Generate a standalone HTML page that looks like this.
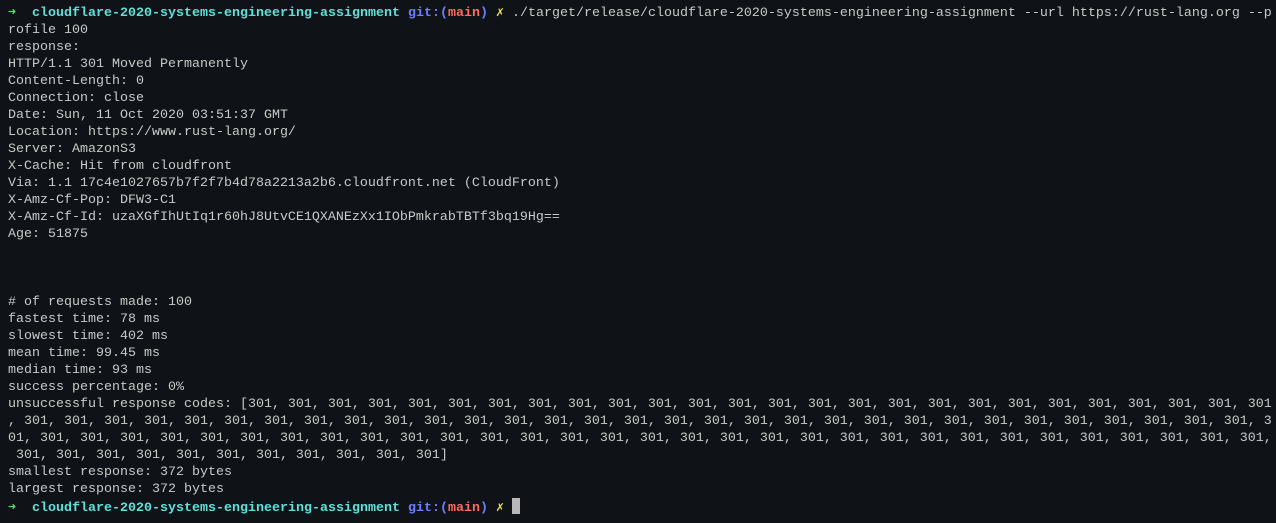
<!DOCTYPE html>
<html><head><meta charset="utf-8"><style>
html,body{margin:0;padding:0;background:#0f1317;width:1276px;height:523px;overflow:hidden}
pre{margin:0;padding:4px 0 0 8px;font-family:"Liberation Mono",monospace;font-size:13.333px;line-height:17px;color:#c9c9c9;white-space:pre}
.g{color:#4ee06a;font-weight:bold;font-family:"DejaVu Sans Mono",monospace}.c{color:#5fe0d8;font-weight:bold}.b{color:#6f7dff;font-weight:bold}.r{color:#ff6b5e;font-weight:bold}.y{color:#f2e14c;font-weight:bold}
.cur{display:inline-block;width:8px;height:16px;background:#b8b8b8;vertical-align:-3px}
</style></head><body><pre><span class="g">➜</span>  <span class="c">cloudflare-2020-systems-engineering-assignment</span> <span class="b">git:(</span><span class="r">main</span><span class="b">)</span> <span class="y">✗</span> ./target/release/cloudflare-2020-systems-engineering-assignment --url https://rust-lang.org --p
rofile 100
response:
HTTP/1.1 301 Moved Permanently
Content-Length: 0
Connection: close
Date: Sun, 11 Oct 2020 03:51:37 GMT
Location: https://www.rust-lang.org/
Server: AmazonS3
X-Cache: Hit from cloudfront
Via: 1.1 17c4e1027657b7f2f7b4d78a2213a2b6.cloudfront.net (CloudFront)
X-Amz-Cf-Pop: DFW3-C1
X-Amz-Cf-Id: uzaXGfIhUtIq1r60hJ8UtvCE1QXANEzXx1IObPmkrabTBTf3bq19Hg==
Age: 51875



# of requests made: 100
fastest time: 78 ms
slowest time: 402 ms
mean time: 99.45 ms
median time: 93 ms
success percentage: 0%
unsuccessful response codes: [301, 301, 301, 301, 301, 301, 301, 301, 301, 301, 301, 301, 301, 301, 301, 301, 301, 301, 301, 301, 301, 301, 301, 301, 301, 301
, 301, 301, 301, 301, 301, 301, 301, 301, 301, 301, 301, 301, 301, 301, 301, 301, 301, 301, 301, 301, 301, 301, 301, 301, 301, 301, 301, 301, 301, 301, 301, 3
01, 301, 301, 301, 301, 301, 301, 301, 301, 301, 301, 301, 301, 301, 301, 301, 301, 301, 301, 301, 301, 301, 301, 301, 301, 301, 301, 301, 301, 301, 301, 301,
 301, 301, 301, 301, 301, 301, 301, 301, 301, 301, 301]
smallest response: 372 bytes
largest response: 372 bytes
<span class="g">➜</span>  <span class="c">cloudflare-2020-systems-engineering-assignment</span> <span class="b">git:(</span><span class="r">main</span><span class="b">)</span> <span class="y">✗</span> <span class="cur"></span></pre></body></html>
